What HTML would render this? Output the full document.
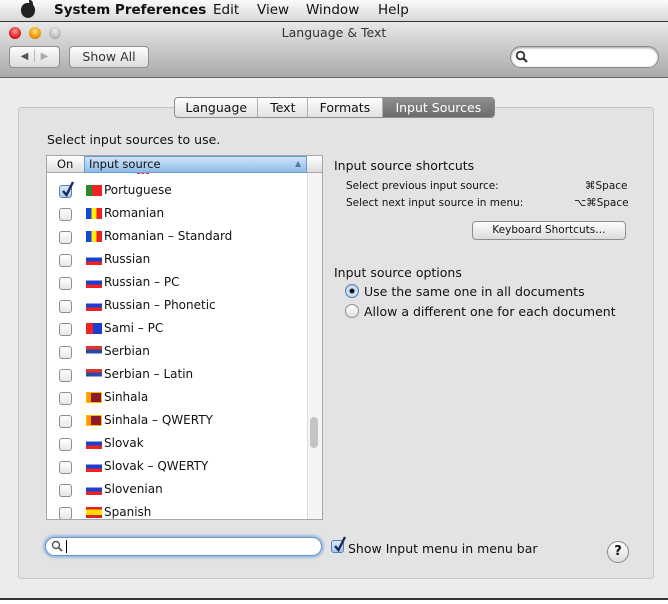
<!DOCTYPE html>
<html><head><meta charset="utf-8"><style>
*{box-sizing:border-box;margin:0;padding:0}
body{width:668px;height:604px;overflow:hidden;background:#fff;font-family:"DejaVu Sans","Liberation Sans",sans-serif;font-size:12px;color:#111;position:relative}
.abs{position:absolute}
#menubar{left:0;top:0;width:668px;height:22px;background:linear-gradient(#fafafa,#d8d8d8);border-bottom:1px solid #333;font-size:13.5px}
#menubar span{position:absolute;top:2px}
#win{left:0;top:22px;width:668px;height:578px;background:#ececec;border-bottom:2px solid #333}
#tb{left:0;top:22px;width:668px;height:56px;background:linear-gradient(#e8e8e8,#a9a9a9);border-bottom:1px solid #666}
.light{width:12px;height:12px;border-radius:50%;top:27px}
.btn{background:linear-gradient(#fdfdfd,#dcdcdc);border:1px solid #8e8e8e;border-radius:4px;text-align:center}
#box{left:18px;top:107px;width:636px;height:472px;background:#e3e3e3;border:1px solid #c6c6c6;border-radius:3px}
#tabs{left:174px;top:97px;height:21px;width:321px;border:1px solid #8c8c8c;border-radius:4px;background:linear-gradient(#fefefe,#e1e1e1);display:flex;overflow:hidden}
#tabs div{height:19px;line-height:19px;text-align:center;border-right:1px solid #b0b0b0;font-size:12.5px}
#list{left:46px;top:155px;width:277px;height:365px;background:#fff;border:1px solid #a6a6a6;overflow:hidden}
.row{position:absolute;left:0;height:23px;width:260px}
.cb{position:absolute;left:13px;top:4px;width:13px;height:13px;border:1px solid #8e8e8e;border-radius:3px;background:linear-gradient(#fff,#e6e6e6)}
.fl{position:absolute;left:40px;top:4px;width:16px;height:11px}
.tx{position:absolute;left:58px;top:2px;font-size:12px}
.sm{font-size:10.5px}
.radio{width:14px;height:14px;border-radius:50%;border:1px solid #8e8e8e;background:linear-gradient(#fff,#e0e0e0)}
.chk{position:absolute;width:13px;height:13px}
</style></head><body>
<div id="menubar" class="abs">
<span style="left:21px;top:3px;width:14px;height:15px;background:#222;border-radius:45% 45% 50% 50%"></span>
<span style="left:29px;top:0px;width:4px;height:5px;background:#222;border-radius:0 80% 0 80%"></span>
<span style="left:54px;font-weight:bold">System Preferences</span>
<span style="left:213px">Edit</span><span style="left:257px">View</span><span style="left:306px">Window</span><span style="left:378px">Help</span>
</div>
<div id="win" class="abs"></div>
<div id="tb" class="abs"></div>
<div class="abs light" style="left:9px;background:radial-gradient(circle at 50% 35%,#f99,#d22 60%,#900)"></div>
<div class="abs light" style="left:29px;background:radial-gradient(circle at 50% 35%,#fd8,#e90 60%,#a60)"></div>
<div class="abs light" style="left:49px;background:radial-gradient(circle at 50% 35%,#eee,#bbb 60%,#888)"></div>
<div class="abs" style="left:0;top:25px;width:668px;text-align:center;font-size:12.5px;color:#333">Language &amp; Text</div>
<div class="abs btn" style="left:9px;top:46px;width:51px;height:22px;font-size:10px;line-height:20px;color:#555">◀ <span style="color:#aaa">│ ▶</span></div>
<div class="abs btn" style="left:69px;top:46px;width:80px;height:22px;line-height:20px;font-size:12.5px;color:#333">Show All</div>
<div class="abs" style="left:510px;top:46px;width:149px;height:22px;border-radius:11px;background:#fff;border:1px solid #8a8a8a;box-shadow:inset 0 1px 2px #999"></div>
<svg class="abs" style="left:515px;top:50px" width="14" height="14"><circle cx="5.5" cy="5.5" r="3.8" fill="none" stroke="#333" stroke-width="1.8"/><line x1="8.3" y1="8.3" x2="12" y2="12" stroke="#333" stroke-width="2.2"/></svg>
<div id="box" class="abs"></div>
<div id="tabs" class="abs">
<div style="width:84px">Language</div><div style="width:50px">Text</div><div style="width:75px">Formats</div>
<div style="width:112px;border:none;background:linear-gradient(#8e8e8e,#6c6c6c);color:#fff">Input Sources</div>
</div>
<div class="abs" style="left:47px;top:132px;font-size:12.5px">Select input sources to use.</div>
<div id="list" class="abs">
<div class="abs" style="left:0;top:0;width:275px;height:17px;background:linear-gradient(#fff,#ddd);border-bottom:1px solid #aaa"></div>
<div class="abs" style="left:10px;top:1px;font-size:11.5px">On</div>
<div class="abs" style="left:37px;top:0;width:223px;height:17px;background:linear-gradient(#cfe3f8,#8fbce9);border:1px solid #6c9bd0"></div>
<div class="abs" style="left:42px;top:1px;font-size:11.5px">Input source</div>
<div class="abs" style="left:248px;top:3px;font-size:8px;color:#5577aa">▲</div>
<div class="abs" style="left:260px;top:17px;width:15px;height:348px;background:#f4f4f4;border-left:1px solid #ddd"></div>
<div class="abs" style="left:263px;top:261px;width:8px;height:31px;border-radius:4px;background:#c4c4c4"></div>
<div class="abs" style="left:90px;top:17px;width:12px;height:3px;border-top:1px dashed #e33"></div>
</div>
<div class="abs" style="left:46px;top:160px;width:262px;height:359px;overflow:hidden">
<div class="row" style="top:21px"><div class="cb" style="background:linear-gradient(#dbe9f8,#a9c9ec);border-color:#5a7fb0"></div><svg class="abs" style="left:14px;top:0" width="16" height="17"><path d="M3 10 L6.5 14 L13 1" fill="none" stroke="#1a2a5a" stroke-width="2.4"/></svg><div class="fl" style="background:linear-gradient(90deg,#2a8a2a 38%,#e22 38%)"></div><div class="tx">Portuguese</div></div>
<div class="row" style="top:44px"><div class="cb"></div><div class="fl" style="background:linear-gradient(90deg,#1646d8 33%,#fe0 33% 66%,#e22 66%)"></div><div class="tx">Romanian</div></div>
<div class="row" style="top:67px"><div class="cb"></div><div class="fl" style="background:linear-gradient(90deg,#1646d8 33%,#fe0 33% 66%,#e22 66%)"></div><div class="tx">Romanian – Standard</div></div>
<div class="row" style="top:90px"><div class="cb"></div><div class="fl" style="background:linear-gradient(#fff 33%,#1a3fd0 33% 66%,#e22 66%)"></div><div class="tx">Russian</div></div>
<div class="row" style="top:113px"><div class="cb"></div><div class="fl" style="background:linear-gradient(#fff 33%,#1a3fd0 33% 66%,#e22 66%)"></div><div class="tx">Russian – PC</div></div>
<div class="row" style="top:136px"><div class="cb"></div><div class="fl" style="background:linear-gradient(#fff 33%,#1a3fd0 33% 66%,#e22 66%)"></div><div class="tx">Russian – Phonetic</div></div>
<div class="row" style="top:159px"><div class="cb"></div><div class="fl" style="background:linear-gradient(90deg,#e22 45%,#1a3fd0 45%)"></div><div class="tx">Sami – PC</div></div>
<div class="row" style="top:182px"><div class="cb"></div><div class="fl" style="background:linear-gradient(#d33 33%,#2a4aa0 33% 66%,#fff 66%)"></div><div class="tx">Serbian</div></div>
<div class="row" style="top:205px"><div class="cb"></div><div class="fl" style="background:linear-gradient(#d33 33%,#2a4aa0 33% 66%,#fff 66%)"></div><div class="tx">Serbian – Latin</div></div>
<div class="row" style="top:228px"><div class="cb"></div><div class="fl" style="background:linear-gradient(90deg,#f90 30%,#8a1a2a 30%);border:1px solid #fb0"></div><div class="tx">Sinhala</div></div>
<div class="row" style="top:251px"><div class="cb"></div><div class="fl" style="background:linear-gradient(90deg,#f90 30%,#8a1a2a 30%);border:1px solid #fb0"></div><div class="tx">Sinhala – QWERTY</div></div>
<div class="row" style="top:274px"><div class="cb"></div><div class="fl" style="background:linear-gradient(#fff 33%,#1a3fd0 33% 66%,#e22 66%)"></div><div class="tx">Slovak</div></div>
<div class="row" style="top:297px"><div class="cb"></div><div class="fl" style="background:linear-gradient(#fff 33%,#1a3fd0 33% 66%,#e22 66%)"></div><div class="tx">Slovak – QWERTY</div></div>
<div class="row" style="top:320px"><div class="cb"></div><div class="fl" style="background:linear-gradient(#fff 33%,#1a3fd0 33% 66%,#e22 66%)"></div><div class="tx">Slovenian</div></div>
<div class="row" style="top:343px"><div class="cb"></div><div class="fl" style="background:linear-gradient(#d22 25%,#fd0 25% 75%,#d22 75%)"></div><div class="tx">Spanish</div></div>
</div>
<div class="abs" style="left:334px;top:158px;font-size:12.5px">Input source shortcuts</div>
<div class="abs sm" style="left:346px;top:180px">Select previous input source:</div>
<div class="abs sm" style="left:346px;top:197px">Select next input source in menu:</div>
<div class="abs sm" style="left:585px;top:180px">⌘Space</div>
<div class="abs sm" style="left:574px;top:197px">⌥⌘Space</div>
<div class="abs btn" style="left:472px;top:221px;width:154px;height:19px;font-size:10.5px;line-height:17px">Keyboard Shortcuts…</div>
<div class="abs" style="left:334px;top:265px;font-size:12.5px">Input source options</div>
<div class="abs radio" style="left:345px;top:284px;background:radial-gradient(#111 2px,#d8e8f8 3px,#9ec3ea);border-color:#5a7fb0"></div>
<div class="abs" style="left:364px;top:284px;font-size:12.5px">Use the same one in all documents</div>
<div class="abs radio" style="left:345px;top:304px"></div>
<div class="abs" style="left:364px;top:304px;font-size:12.5px">Allow a different one for each document</div>
<div class="abs" style="left:45px;top:537px;width:277px;height:19px;border-radius:10px;background:#fff;border:1px solid #6d95c8;box-shadow:0 0 2px 2px #9ebbe3"></div>
<svg class="abs" style="left:51px;top:540px" width="13" height="13"><circle cx="5" cy="5" r="3.5" fill="none" stroke="#555" stroke-width="1.4"/><line x1="7.5" y1="7.5" x2="11" y2="11" stroke="#555" stroke-width="1.8"/></svg>
<div class="abs" style="left:66px;top:540px;width:1px;height:13px;background:#000"></div>
<div class="abs" style="left:331px;top:540px;width:13px;height:13px;border:1px solid #5a7fb0;border-radius:3px;background:linear-gradient(#dbe9f8,#a9c9ec)"></div>
<svg class="abs" style="left:332px;top:536px" width="16" height="17"><path d="M3 10 L6.5 14 L13 1" fill="none" stroke="#1a2a5a" stroke-width="2.4"/></svg>
<div class="abs" style="left:348px;top:541px;font-size:12.5px">Show Input menu in menu bar</div>
<div class="abs" style="left:607px;top:541px;width:22px;height:22px;border-radius:50%;border:1px solid #888;background:linear-gradient(#fff,#ddd);text-align:center;line-height:20px;font-size:13px;font-weight:bold">?</div>
</body></html>
